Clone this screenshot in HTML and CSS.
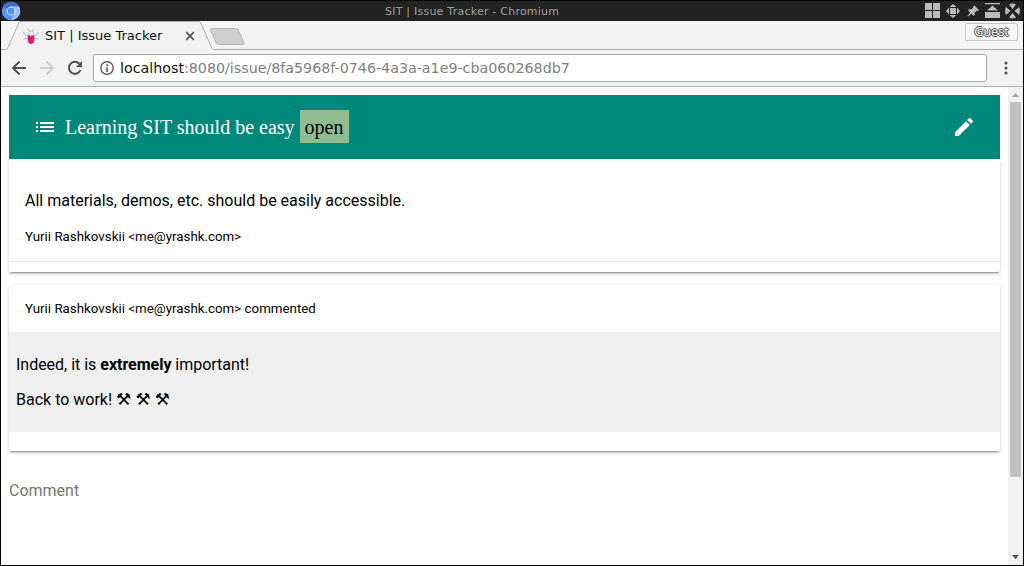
FILE: index.html
```html
<!DOCTYPE html>
<html lang="en">
<head>
<meta charset="utf-8">
<title>SIT | Issue Tracker</title>
<link rel="stylesheet" href="styles.css">
</head>
<body>
<div class="window">
  <header class="titlebar">
    <svg class="app-icon" width="20" height="20" viewBox="0 0 20 20"><circle cx="10" cy="10" r="9.2" fill="#5592f3"/><path d="M10 10 2 5.400A9.200 9.200 0 0 1 18.100 5.600H10Z" fill="#416ccc"/><path d="M10 5.600h8.100A9.200 9.200 0 0 1 9.800 19.200L13.800 12.200Z" fill="#9fc1fa"/><circle cx="10" cy="10" r="4.400" fill="#dfeafc"/><circle cx="10" cy="10" r="3.400" fill="#4f8df0"/></svg>
    <span class="window-title">SIT | Issue Tracker - Chromium</span>
    <svg class="window-buttons" width="98" height="20" viewBox="0 0 98 20" fill="#bababa">
      <path d="M0 2h7v7H0zM8 2h7v7H8zM0 10h7v7H0zM8 10h7v7H8z"/>
      <path d="M25 7h6v6h-6zM28 3l3.500 3h-7zM28 17l3.500-3h-7zM21 10l3-3.500v7zM35 10l-3-3.500v7z"/>
      <path d="M49.500 4.500 54 9l-1 1-1.200-.3-2.100 2.100v2.200l-1 1-2.300-2.300L43 15.500l-.5-.5 2.700-3.500L43 9.200l1-1 2.300.1 2.300-2.200-.2-1z"/>
      <path d="M60 2h15v1.200H60zM67.500 4.500l5.500 5H62zM60 11h15v6H60z"/>
      <path d="M84 3.500q3.500-1.800 7 0L87.500 8zM84 16.500q3.500 1.800 7 0L87.500 12zM81 6q-1.800 4 0 8l4.500-4zM94 6q1.800 4 0 8l-4.500-4z"/>
    </svg>
  </header>
  <div class="tabstrip">
    <svg class="tab-shapes" width="1022" height="29" viewBox="0 0 1022 29">
      <path d="M0 28.500H4.500q1.500 0 2-1L18 1.500Q18.500 .5 20 .5H198q1 0 1.500 1L211 27.500q.5 1 2 1H1022V29H0Z" fill="#f2f2f2"/>
      <path d="M0 28.500H4.500q1.500 0 2-1L18 1.500Q18.500 .5 20 .5H198q1 0 1.500 1L211 27.500q.5 1 2 1H1022" fill="none" stroke="#adadad"/>
      <path d="M210.500 7.500H235q1.500 0 2.200 1.500L243 22q.6 1.500-1 1.500H217.500q-1.500 0-2.200-1.300L209.500 9q-.5-1.500 1-1.500Z" fill="#cfcfcf" stroke="#b7b7b7"/>
    </svg>
    <div class="tab">
      <svg width="16" height="16" viewBox="0 0 16 16" fill="none"><path d="M6.500 3 5 .5M9.500 3 11 .5M5 8 1.500 6 .5 4M11 8l3.500-2 1-2M5 10.500H2L.5 12M11 10.500h3l1.500 1.500M5.500 13.500 3.500 15M10.500 13.500l2 1.500" stroke="#b4b4b4"/><path d="M5.200 7.500C4 1.500 12 1.500 10.800 7.500Z" fill="#e8e8e8" stroke="#b0b0b0" stroke-width=".6"/><path d="M5 8q1.500-.8 3 .4 1.500-1.200 3-.4v4Q10.500 15.600 8 15.800 5.500 15.600 5 12Z" fill="#e8127c" stroke="#8f3a5c" stroke-width=".6"/></svg>
      <span class="tab-title">SIT | Issue Tracker</span>
      <svg width="10" height="10" viewBox="0 0 10 10"><path d="M1.200 1.200 8.800 8.800M8.800 1.200 1.200 8.800" stroke="#5a5a5a" stroke-width="1.800"/></svg>
    </div>
    <div class="guest">Guest</div>
  </div>
  <div class="toolbar">
    <svg class="nav" width="84" height="18" viewBox="0 0 84 18" fill="none" stroke-width="2"><path d="M16 9H3.500M9.500 2.500 3 9l6.500 6.500" stroke="#505050"/><path d="M30 9h12.500M36.500 2.500 43 9l-6.500 6.500" stroke="#d0d0d0"/><path d="M69.300 4.700A6 6 0 1 0 70.500 11" stroke="#505050"/><path d="M72 2v6h-6z" fill="#505050"/></svg>
    <div class="address">
      <svg width="14" height="14" viewBox="0 0 14 14"><circle cx="7" cy="7" r="6.200" fill="none" stroke="#5a5a5a" stroke-width="1.400"/><path d="M6.200 6.200h1.700V11H6.200zM6.200 3.200h1.700v1.700H6.200z" fill="#5a5a5a"/></svg>
      <span class="url"><b>localhost</b>:8080/issue/8fa5968f-0746-4a3a-a1e9-cba060268db7</span>
    </div>
    <svg class="more" width="4" height="14" viewBox="0 0 4 14" fill="#505050"><circle cx="2" cy="2" r="1.500"/><circle cx="2" cy="7" r="1.500"/><circle cx="2" cy="12" r="1.500"/></svg>
  </div>
  <div class="viewport">
    <main class="page">
      <div class="issue-bar">
        <svg width="24" height="24" viewBox="0 0 24 24" fill="#fff"><path d="M3 13h2v-2H3v2zm0 4h2v-2H3v2zm0-8h2V7H3v2zm4 4h14v-2H7v2zm0 4h14v-2H7v2zM7 7v2h14V7H7z"/></svg>
        <span class="issue-title">Learning SIT should be easy</span>
        <span class="state">open</span>
        <svg class="edit" width="24" height="24" viewBox="0 0 24 24" fill="#fff"><path d="M3 17.250V21h3.750L17.810 9.940l-3.750-3.750L3 17.250zM20.710 7.040c.39-.39.39-1.020 0-1.410l-2.340-2.340c-.39-.39-1.020-.39-1.410 0l-1.830 1.830 3.750 3.750 1.830-1.830z"/></svg>
      </div>
      <section class="card issue">
        <p class="description">All materials, demos, etc. should be easily accessible.</p>
        <p class="author">Yurii Rashkovskii &lt;me@yrashk.com&gt;</p>
        <div class="card-actions"></div>
      </section>
      <section class="card comment">
        <p class="author">Yurii Rashkovskii &lt;me@yrashk.com&gt; commented</p>
        <div class="comment-body">
          <p class="remark">Indeed, it is <strong>extremely</strong> important!</p>
          <p>Back to work! <span class="tools">⚒ ⚒ ⚒</span></p>
        </div>
      </section>
      <div class="comment-input">Comment</div>
    </main>
    <div class="scrollbar">
      <svg width="7" height="4" viewBox="0 0 7 4"><path d="M0 4 3.500 0 7 4z" fill="#a3a3a3"/></svg>
      <div class="thumb"></div>
      <svg class="down" width="7" height="4" viewBox="0 0 7 4"><path d="M0 0h7L3.500 4z" fill="#505050"/></svg>
    </div>
  </div>
</div>
</body>
</html>
```
FILE: styles.css
```css
* { box-sizing: border-box; }
body { margin: 0; overflow: hidden; font-family: Roboto, sans-serif; }
p { margin: 0; }
svg { display: block; flex: none; }
.window { width: 1024px; height: 566px; border: 1px solid #000; display: flex; flex-direction: column; background: #fff; }
.titlebar { height: 20px; flex: none; background: #222; display: flex; align-items: center; }
.window-title { flex: 1; padding: 1px 0 0 364px; font: 11px/19px "DejaVu Sans", sans-serif; letter-spacing: .23px; color: #a0a0a0; }
.tabstrip { position: relative; height: 29px; flex: none; background: #f4f4f4; display: flex; justify-content: space-between; }
.tab-shapes { position: absolute; left: 0; top: 0; }
.tab { position: relative; display: flex; align-items: center; margin-left: 22px; width: 172px; height: 29px; }
.tab-title { flex: 1; margin-left: 6px; font: 13px/29px "DejaVu Sans", sans-serif; color: #111; white-space: nowrap; }
.guest { position: relative; width: 53px; height: 18px; margin: 2px 5px 0 0; border: 1px solid #c4c4c4; border-radius: 2px; background: #f7f7f7; font: 12.500px/15px "Noto Sans", sans-serif; text-align: center; color: #eee; text-shadow: 1px 0 #555, -1px 0 #555, 0 1px #555, 0 -1px #555; }
.toolbar { height: 37px; flex: none; background: #f2f2f2; border-bottom: 1px solid #adadad; display: flex; align-items: center; padding-left: 9px; }
.address { width: 894px; height: 28px; margin-left: -1px; border: 1px solid #a6a6a6; border-radius: 3px; background: #fff; display: flex; align-items: center; padding-left: 6px; gap: 6px; }
.url { font: 14.250px/26px "DejaVu Sans", sans-serif; color: #808080; white-space: nowrap; }
.url b { font-weight: normal; color: #111; }
.more { margin-left: 17px; }
.viewport { flex: 1; display: flex; min-height: 0; }
.page { flex: 1; padding: 8px; }
.issue-bar { height: 64px; background: #00897b; display: flex; align-items: center; padding: 0 24px; font: 20px/23px "Liberation Serif", serif; }
.issue-title { color: #fff; margin: 0 5px 0 8px; white-space: nowrap; }
.state { width: 49px; margin-bottom: 1px; padding: 6px 5px 4px; background: #8fbc8f; color: #000; }
.edit { margin-left: auto; }
.card { background: #fff; border-radius: 2px; box-shadow: 0 2px 2px 0 rgba(0,0,0,.14), 0 1px 5px 0 rgba(0,0,0,.12), 0 3px 1px -2px rgba(0,0,0,.2); color: #000; }
.issue { height: 113px; padding-top: 32px; }
.description { padding-left: 16px; font-size: 16px; line-height: 19px; }
.author { padding-left: 16px; font-size: 13.333px; line-height: 15px; }
.issue .author { margin-top: 19px; }
.card-actions { margin-top: 17px; border-top: 1px solid #e5e5e5; }
.comment { height: 166px; margin-top: 13px; padding-top: 16px; }
.comment-body { height: 100px; margin-top: 16px; padding: 23px 7px 0; background: #efefef; font-size: 16px; line-height: 19px; }
.comment-body p + p { margin-top: 16px; }
.remark { letter-spacing: -.02px; }
.tools { font-family: Roboto, "DejaVu Sans", sans-serif; font-size: 16.900px; line-height: 1; }
.comment-input { margin-top: 30px; font-size: 16px; line-height: 19px; color: #757575; }
.scrollbar { width: 15px; background: #f1f1f1; display: flex; flex-direction: column; align-items: center; padding: 6px 0; }
.thumb { width: 11px; height: 375px; margin-top: 5px; background: #c1c1c1; }
.down { margin-top: auto; }
```
